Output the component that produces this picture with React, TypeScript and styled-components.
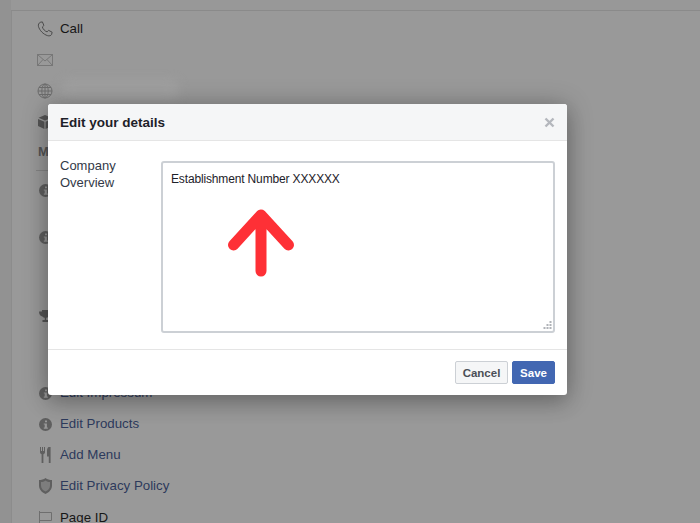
import React from "react"
import styled, { createGlobalStyle } from "styled-components"

const GlobalStyle = createGlobalStyle`
  html, body {
    margin: 0;
    padding: 0;
    height: 100%;
    overflow: hidden;
    background: #929292;
    font-family: "Liberation Sans", Arial, sans-serif;
  }
`

const Phone = () => (
  <svg width="16" height="16" viewBox="0 0 18 18" fill="none" stroke="#4a4a4a" strokeWidth="1.1">
    <path d="M3.5 1.5 L6 1 L7.8 5 L6 6.7 C6.6 9 9 11.6 11.4 12.2 L13 10.5 L17 12.6 L16.4 15.2 C15.6 16.6 13.8 17 12 16.5 C7 15 2.8 10.5 1.6 6 C1.2 4.2 2 2.4 3.5 1.5 Z" />
  </svg>
)
const Mail = () => (
  <svg width="16" height="12" viewBox="0 0 16 12" fill="none" stroke="#777" strokeWidth="1">
    <rect x="0.5" y="0.5" width="15" height="11" />
    <path d="M1 1 L8 7 L15 1 M1 11 L6 5.5 M15 11 L10 5.5" />
  </svg>
)
const Globe = () => (
  <svg width="16" height="16" viewBox="0 0 16 16" fill="none" stroke="#6c6c6c" strokeWidth="1">
    <circle cx="8" cy="8" r="7" />
    <ellipse cx="8" cy="8" rx="3.2" ry="7" />
    <path d="M8 1 V15 M1 8 H15 M2 4.5 H14 M2 11.5 H14" />
  </svg>
)
const Cube = () => (
  <svg width="14" height="14" viewBox="0 0 14 14" fill="#565656">
    <path d="M7 0 L13.5 2.8 L7 5.6 L0.5 2.8 Z M0 4 L6.4 6.8 V14 L0 11 Z M14 4 L7.6 6.8 V14 L14 11 Z" />
  </svg>
)
const Info = () => (
  <svg width="13" height="13" viewBox="0 0 13 13">
    <circle cx="6.5" cy="6.5" r="6.5" fill="#5f5f5f" />
    <path d="M6 2.4 H8 V4.2 H6 Z M4.8 5.4 H7.9 V9.6 H8.8 V10.8 H4.8 V9.6 H5.7 V6.6 H4.8 Z" fill="#989898" />
  </svg>
)
const Trophy = () => (
  <svg width="13" height="13" viewBox="0 0 13 13" fill="#555">
    <path d="M3 0 H10 V1.5 H13 C13 4.5 11.5 6 9.6 6.4 C9 7.2 8 7.6 7.2 7.8 V10 H9.5 V12 H3.5 V10 H5.8 V7.8 C5 7.6 4 7.2 3.4 6.4 C1.5 6 0 4.5 0 1.5 H3 Z" />
  </svg>
)
const Cutlery = () => (
  <svg width="11" height="16" viewBox="0 0 11 16" fill="#5f5f5f">
    <path d="M0 0 H1 V4 H2 V0 H3 V4 H4 V0 H5 V5 C5 6.4 4.2 7 3.4 7.2 V16 H1.6 V7.2 C0.8 7 0 6.4 0 5 Z" />
    <path d="M8.6 0 H10.6 V16 H8.8 V9.5 H7 V4 C7 2 7.6 0.6 8.6 0 Z" />
  </svg>
)
const Shield = () => (
  <svg width="13" height="16" viewBox="0 0 13 16">
    <path d="M6.5 0 C8.4 1.4 10.6 2 13 2 V7.5 C13 11.4 10.2 14.4 6.5 16 C2.8 14.4 0 11.4 0 7.5 V2 C2.4 2 4.6 1.4 6.5 0 Z" fill="#5f5f5f" />
    <path d="M6.5 2.4 C8 3.4 9.4 3.9 11 4 V7.8 C11 10.4 9 12.4 6.5 13.6 C4 12.4 2 10.4 2 7.8 V4 C3.6 3.9 5 3.4 6.5 2.4 Z" fill="#7d7d7d" />
  </svg>
)
const Flag = () => (
  <svg width="13" height="14" viewBox="0 0 13 14" fill="none" stroke="#6e6e6e" strokeWidth="1">
    <path d="M0.5 0 V14 M0.5 1.5 H12.5 V9.5 H0.5" />
  </svg>
)

type SideRow = { icon?: React.ReactNode; label?: string; link?: boolean; height: number }

const rows: SideRow[] = [
  { icon: <Phone />, label: "Call", height: 31 },
  { icon: <Mail />, height: 31 },
  { icon: <Globe />, height: 31 },
  { icon: <Cube />, height: 31 },
]

// labels of the first rows sit behind the modal, only their icons show
const lowerRows: SideRow[] = [
  { icon: <Info />, height: 47 },
  { icon: <Info />, height: 79 },
  { icon: <Trophy />, height: 77 },
  { icon: <Info />, label: "Edit Impressum", link: true, height: 31 },
  { icon: <Info />, label: "Edit Products", link: true, height: 31 },
  { icon: <Cutlery />, label: "Add Menu", link: true, height: 31 },
  { icon: <Shield />, label: "Edit Privacy Policy", link: true, height: 32 },
  { icon: <Flag />, label: "Page ID", height: 31 },
]

export default function App() {
  return (
    <>
      <GlobalStyle />
      <Page>
        <TopBand />
        <Sidebar>
          <Smudge />
          {rows.map((row, i) => (
            <Row key={i} $height={row.height}>
              <IconSlot>{row.icon}</IconSlot>
              {row.label && <RowLabel>{row.label}</RowLabel>}
            </Row>
          ))}
          <SectionHead>M</SectionHead>
          {lowerRows.map((row, i) => (
            <Row key={i} $height={row.height} $top>
              <IconSlot>{row.icon}</IconSlot>
              {row.label && <RowLabel $link={row.link}>{row.label}</RowLabel>}
            </Row>
          ))}
        </Sidebar>
        <Modal>
          <ModalHeader>
            <Title>Edit your details</Title>
            <CloseIcon width="11" height="11" viewBox="0 0 11 11">
              <path d="M1.5 1.5 L9.5 9.5 M9.5 1.5 L1.5 9.5" stroke="#b4b7bd" strokeWidth="2.4" />
            </CloseIcon>
          </ModalHeader>
          <ModalBody>
            <FieldLabel>
              Company
              <br />
              Overview
            </FieldLabel>
            <TextBox>
              Establishment Number XXXXXX
              <Arrow width="70" height="76" viewBox="0 0 70 76">
                <path
                  d="M34 7 V63 M6.500 37 L34 7 L61.500 37"
                  fill="none"
                  stroke="#fe3036"
                  strokeWidth="11"
                  strokeLinecap="round"
                  strokeLinejoin="round"
                />
              </Arrow>
              <Grip width="9" height="9" viewBox="0 0 9 9" fill="#b0b3b8">
                <path d="M6.500 0 H8.500 V2 H6.500 Z M3.500 3 H5.500 V5 H3.500 Z M6.500 3 H8.500 V5 H6.500 Z M0.500 6 H2.500 V8 H0.500 Z M3.500 6 H5.500 V8 H3.500 Z M6.500 6 H8.500 V8 H6.500 Z" />
              </Grip>
            </TextBox>
          </ModalBody>
          <ModalFooter>
            <CancelButton>Cancel</CancelButton>
            <SaveButton>Save</SaveButton>
          </ModalFooter>
        </Modal>
      </Page>
    </>
  )
}

const Page = styled.div`
  position: relative;
  width: 700px;
  height: 523px;
  overflow: hidden;
  display: flex;
  flex-direction: column;
  background: #929292;
`

const TopBand = styled.div`
  height: 10px;
  flex: none;
  margin-left: 11px;
  background: #989898;
  border-bottom: 1px solid #8a8a8a;
`

const Sidebar = styled.div`
  position: relative;
  flex: 1;
  padding: 2px 0 0 24px;
  margin-left: 11px;
  border-left: 1px solid #8c8c8c;
  background: #999;
`

const Smudge = styled.div`
  position: absolute;
  left: 48px;
  top: 68px;
  width: 120px;
  height: 22px;
  border-radius: 11px;
  background: #9f9f9f;
  filter: blur(4px);
`

const Row = styled.div<{ $height: number; $top?: boolean }>`
  position: relative;
  display: flex;
  align-items: ${({ $top }) => ($top ? "flex-start" : "center")};
  height: ${({ $height }) => $height}px;
`

const IconSlot = styled.div`
  flex: none;
  width: 18px;
  height: 18px;
  display: flex;
  align-items: center;
  justify-content: center;
  margin-right: 6px;
`

const RowLabel = styled.span<{ $link?: boolean }>`
  font-size: 13.3px;
  line-height: 18px;
  color: ${({ $link }) => ($link ? "#2d3a5c" : "#161616")};
`

const SectionHead = styled.div`
  width: 180px;
  height: 34px;
  margin-bottom: 10px;
  box-sizing: border-box;
  padding: 7px 0 0 2px;
  font-size: 13px;
  font-weight: bold;
  color: #555;
  border-bottom: 1px solid #848484;
`

const Modal = styled.div`
  position: absolute;
  left: 48px;
  top: 104px;
  width: 519px;
  height: 291px;
  display: flex;
  flex-direction: column;
  background: #fff;
  border-radius: 3px;
  box-shadow: 0 2px 26px rgba(0, 0, 0, 0.3), 0 10px 20px rgba(0, 0, 0, 0.12);
`

const ModalHeader = styled.div`
  flex: none;
  height: 36px;
  display: flex;
  align-items: center;
  justify-content: space-between;
  padding: 0 12px;
  background: #f5f6f7;
  border-bottom: 1px solid #e5e5e5;
  border-radius: 3px 3px 0 0;
`

const Title = styled.h2`
  margin: 2px 0 0;
  font-size: 13.5px;
  line-height: 18px;
  font-weight: bold;
  color: #1d2129;
`

const CloseIcon = styled.svg`
  flex: none;
`

const ModalBody = styled.div`
  flex: 1;
  display: flex;
  padding: 20px 12px 16px;
  min-height: 0;
`

const FieldLabel = styled.div`
  flex: none;
  width: 102px;
  margin-top: -4px;
  font-size: 13px;
  line-height: 17px;
  color: #333a48;
`

const TextBox = styled.div`
  position: relative;
  flex: 1;
  box-sizing: border-box;
  margin-left: -1px;
  padding: 8px 8px;
  border: 2px solid #ccd0d5;
  border-radius: 3px;
  font-size: 12px;
  line-height: 16px;
  letter-spacing: -0.15px;
  color: #1d2129;
`

const Arrow = styled.svg`
  position: absolute;
  left: 64px;
  top: 45px;
`

const Grip = styled.svg`
  position: absolute;
  right: 1px;
  bottom: 1px;
`

const ModalFooter = styled.div`
  flex: none;
  box-sizing: border-box;
  height: 46px;
  display: flex;
  align-items: flex-start;
  justify-content: flex-end;
  gap: 4px;
  padding: 11px 12px 0;
  border-top: 1px solid #e5e5e5;
`

const CancelButton = styled.button`
  box-sizing: border-box;
  width: 53px;
  height: 23px;
  padding: 0;
  background: #f5f6f7;
  border: 1px solid #ccd0d5;
  border-radius: 2px;
  font-family: inherit;
  font-size: 11.5px;
  font-weight: bold;
  color: #4b4f56;
`

const SaveButton = styled.button`
  box-sizing: border-box;
  width: 43px;
  height: 23px;
  padding: 0;
  background: #4267b2;
  border: 1px solid #4267b2;
  border-radius: 2px;
  font-family: inherit;
  font-size: 11.5px;
  font-weight: bold;
  color: #fff;
`
